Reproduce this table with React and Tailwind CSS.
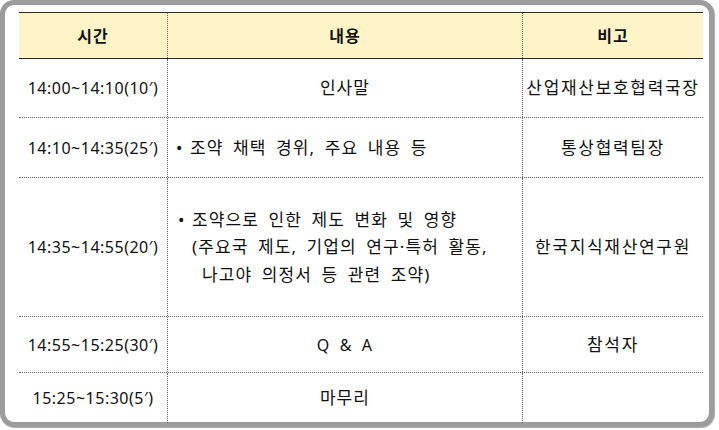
export default function App() {
  const rows = [
    { time: "14:00~14:10(10′)", h: "h-[59px]", content: <div className="text-center">인사말</div>, note: "산업재산보호협력국장" },
    {
      time: "14:10~14:35(25′)",
      h: "h-[60px]",
      content: (
        <div className="flex pl-[8px]">
          <span className="w-[14px] shrink-0">•</span>
          <span>조약 채택 경위, 주요 내용 등</span>
        </div>
      ),
      note: "통상협력팀장",
    },
    {
      time: "14:35~14:55(20′)",
      h: "h-[139px]",
      content: (
        <div className="pl-[10px] leading-[27.5px]">
          <div className="flex">
            <span className="w-[14px] shrink-0">•</span>
            <span>조약으로 인한 제도 변화 및 영향</span>
          </div>
          <div className="pl-[14px]">(주요국 제도, 기업의 연구·특허 활동,</div>
          <div className="pl-[24px]">나고야 의정서 등 관련 조약)</div>
        </div>
      ),
      note: "한국지식재산연구원",
    },
    {
      time: "14:55~15:25(30′)",
      h: "h-[56px]",
      content: <div className="text-center text-[16px] [word-spacing:4px]">Q &amp; A</div>,
      note: "참석자",
    },
    { time: "15:25~15:30(5′)", h: "h-[50px]", content: <div className="text-center">마무리</div>, note: "", last: true },
  ];

  return (
    <div className="w-[719px] h-[430px] bg-white font-['Noto_Sans','Noto_Sans_CJK_KR',sans-serif] text-[#111]">
      <div className="w-[714px] h-[427px] rounded-[14px] border-[5px] border-[#9c9c9c] bg-white pl-[14px] pr-[6px] pt-[7px] shadow-[1px_1px_1px_rgba(0,0,0,0.35)]">
        <div className="w-[684px] border-t border-[#2a2a2a]">
          <div className="grid grid-cols-[149px_355px_180px] h-[46px] bg-[#fff4c8] border-b border-[#2a2a2a] text-[16px] font-bold tracking-[1px]">
            <div className="flex items-center justify-center border-r border-dotted border-[#666]">시간</div>
            <div className="flex items-center justify-center border-r border-dotted border-[#666]">내용</div>
            <div className="flex items-center justify-center">비고</div>
          </div>
          {rows.map((r, i) => (
            <div
              key={i}
              className={`grid grid-cols-[149px_355px_180px] ${r.h} ${r.last ? "" : "border-b border-dotted border-[#666]"}`}
            >
              <div className="flex items-center justify-center border-r border-dotted border-[#666] text-[16px] tracking-[0.5px]">{r.time}</div>
              <div className="flex flex-col justify-center border-r border-dotted border-[#666] text-[17px] tracking-[1.1px] [word-spacing:4px]">
                {r.content}
              </div>
              <div className="flex items-center justify-center text-[17px] tracking-[1.7px]">{r.note}</div>
            </div>
          ))}
        </div>
      </div>
    </div>
  );
}
